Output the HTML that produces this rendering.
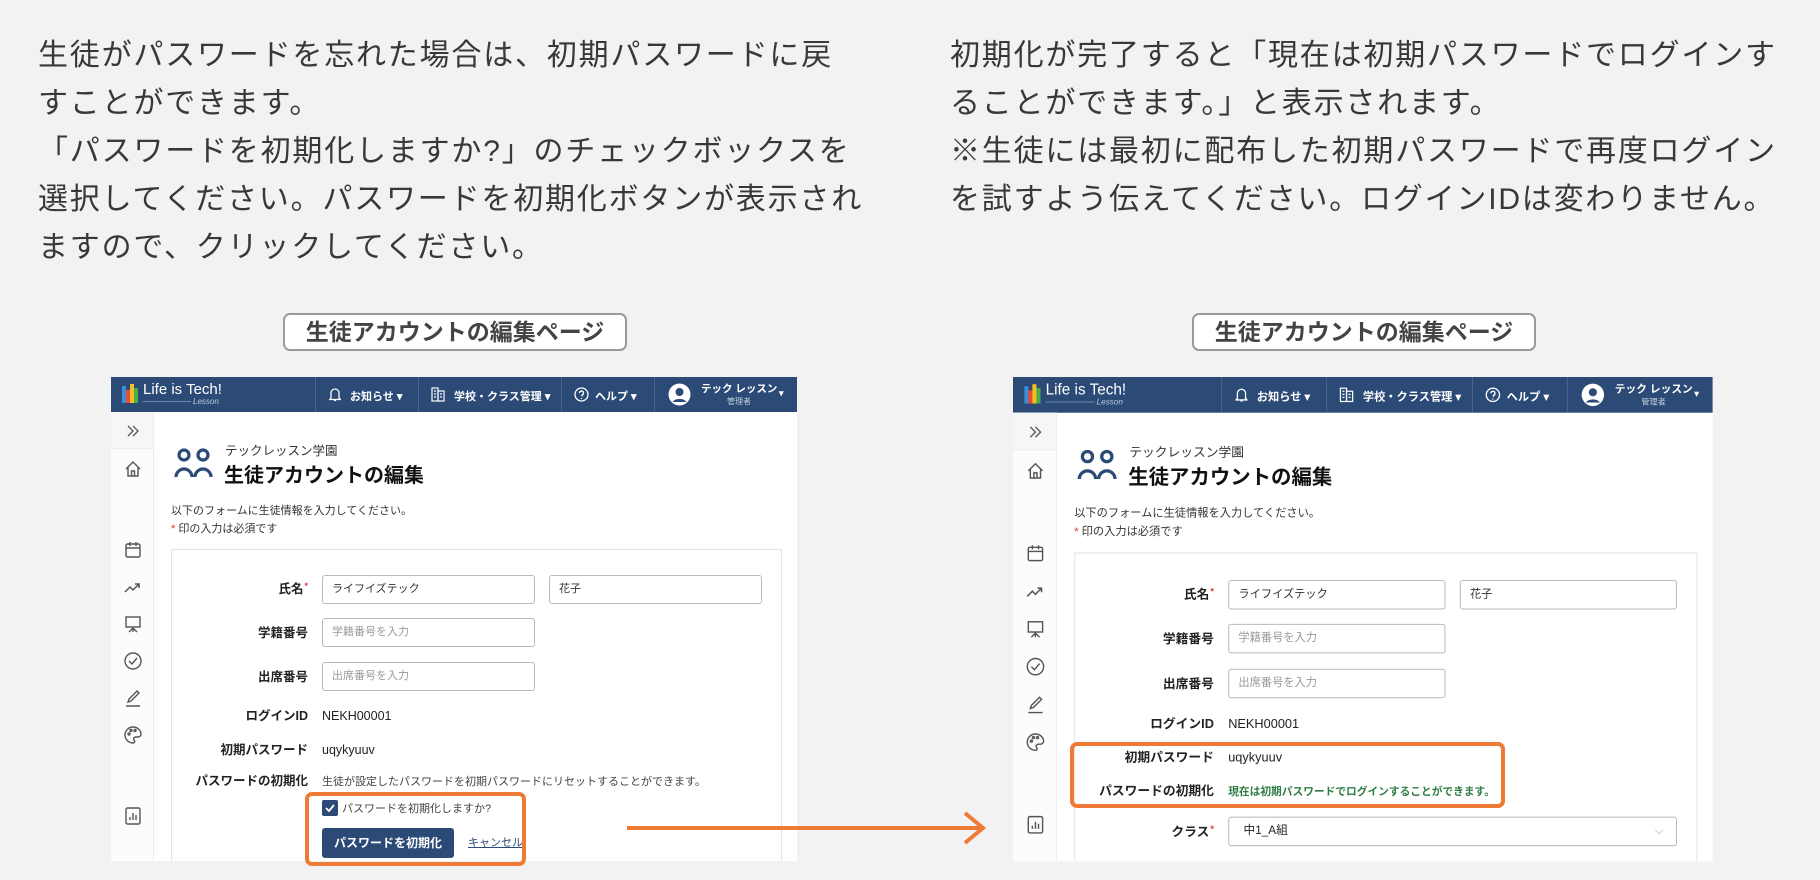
<!DOCTYPE html>
<html><head><meta charset="utf-8"><style>
*{margin:0;padding:0;box-sizing:border-box}
body{width:1820px;height:880px;background:#f2f2f2;position:relative;overflow:hidden;font-family:"Liberation Sans","Noto Sans CJK JP",sans-serif}
.para{position:absolute;top:32px;font-size:30px;line-height:48px;color:#383838;letter-spacing:1.8px;white-space:nowrap}
.lbl{position:absolute;top:313px;height:38px;border:2px solid #9a9a9a;border-radius:7px;background:#fff;font-size:23px;font-weight:bold;color:#444;text-align:center;line-height:34px}
.panel{position:absolute;top:377px;width:686px;height:484px;background:#fff;overflow:hidden;transform-origin:0 0}
.hdr{position:absolute;left:0;top:0;width:686px;height:35px;background:#2b4a76;color:#fff;font-size:11px;font-weight:bold}
.hdr .dv{position:absolute;top:0;width:1px;height:35px;background:#4a6690}
.hdr .t{position:absolute;top:11px;white-space:nowrap}
.side{position:absolute;left:0;top:35px;width:43px;height:460px;background:#fcfcfc;border-right:1px solid #ececec}
.side .top{height:37px;background:#f6f6f6;border-bottom:1px solid #ececec}
.ic{position:absolute;left:12px}
.sub{position:absolute;left:114px;top:63px;font-size:12.5px;color:#333}
.ttl{position:absolute;left:113px;top:82px;font-size:20px;font-weight:bold;color:#111}
.desc{position:absolute;left:60px;font-size:11px;color:#333;white-space:nowrap}
.card{position:absolute;left:60px;top:172px;width:611px;height:330px;border:1px solid #e4e4e4;background:#fff}
.l{position:absolute;right:489px;font-size:12.5px;line-height:16px;font-weight:bold;color:#222;white-space:nowrap;text-align:right}
.v{position:absolute;left:211px;font-size:12.5px;line-height:16px;color:#222;white-space:nowrap}
.in{position:absolute;height:29px;border:1px solid #b9b9b9;border-radius:3px;font-size:11px;padding-left:9px;line-height:27px;color:#333}
.ph{color:#999}
.req{color:#d33;font-size:9px;position:relative;top:-4px;margin-left:1px}
.orange{position:absolute;border:4px solid #ef7a36;border-radius:7px}
</style></head><body>

<div class="para" style="left:38px">生徒がパスワードを忘れた場合は、初期パスワードに戻<br>すことができます。<br>「パスワードを初期化しますか?」のチェックボックスを<br>選択してください。パスワードを初期化ボタンが表示され<br>ますので、クリックしてください。</div>
<div class="para" style="left:950px">初期化が完了すると「現在は初期パスワードでログインす<br>ることができます。」と表示されます。<br>※生徒には最初に配布した初期パスワードで再度ログイン<br>を試すよう伝えてください。ログインIDは変わりません。</div>

<div class="lbl" style="left:283px;width:344px">生徒アカウントの編集ページ</div>
<div class="lbl" style="left:1192px;width:344px">生徒アカウントの編集ページ</div>

<!-- LEFT PANEL -->
<div class="panel" style="left:111px">
 <div class="hdr">
  <svg style="position:absolute;left:11px;top:7px" width="16" height="20"><rect x="0" y="2" width="4" height="17" fill="#3b8fd6"/><rect x="4" y="6" width="4" height="13" fill="#e94b3c"/><rect x="8" y="0" width="4" height="19" fill="#f4c11f"/><rect x="12" y="4" width="4" height="15" fill="#4fae4a"/></svg>
  <div class="t" style="left:32px;top:4px;font-size:15px;font-weight:normal">Life is Tech!</div>
  <div style="position:absolute;left:32px;top:24px;width:48px;height:1px;background:#6b87ad"></div>
  <div class="t" style="left:82px;top:20px;font-size:8px;font-style:italic;font-weight:normal;color:#bcd">Lesson</div>
  <div class="dv" style="left:204px"></div><div class="dv" style="left:307px"></div><div class="dv" style="left:450px"></div><div class="dv" style="left:543px"></div>
  <svg style="position:absolute;left:218px;top:10px" width="12" height="15" fill="none" stroke="#fff" stroke-width="1.3"><path d="M2 11V6a4 4 0 0 1 8 0v5l1.5 1.5h-11z M5 13.5h2"/></svg>
  <div class="t" style="left:239px">お知らせ ▾</div>
  <svg style="position:absolute;left:320px;top:10px" width="14" height="15" fill="none" stroke="#fff" stroke-width="1.2"><rect x="1" y="1" width="6" height="13"/><rect x="7" y="4" width="6" height="10"/><path d="M3 4h2M3 7h2M3 10h2M9 7h2M9 10h2"/></svg>
  <div class="t" style="left:343px">学校・クラス管理 ▾</div>
  <svg style="position:absolute;left:463px;top:10px" width="15" height="15" fill="none" stroke="#fff" stroke-width="1.3"><circle cx="7.5" cy="7.5" r="6.5"/><path d="M5.5 6a2 2 0 1 1 2.5 2v1.5M7.5 11v1"/></svg>
  <div class="t" style="left:484px">ヘルプ ▾</div>
  <svg style="position:absolute;left:557px;top:6px" width="23" height="23"><circle cx="11.5" cy="11.5" r="11" fill="#fff"/><circle cx="11.5" cy="9" r="4" fill="#2b4a76"/><path d="M4.5 19a8 6 0 0 1 14 0" fill="#2b4a76"/></svg>
  <div class="t" style="left:590px;top:4px;font-size:10.5px">テック レッスン</div>
  <div class="t" style="left:616px;top:19px;font-size:8px;font-weight:normal;color:#c8d2e0">管理者</div>
  <div class="t" style="left:668px;font-size:9px">▾</div>
 </div>
 <div class="side"><div class="top"></div></div>
 <svg class="ic" style="top:46px" width="20" height="16" fill="none" stroke="#555" stroke-width="1.3"><path d="M5 3l5 5-5 5M10 3l5 5-5 5"/></svg>
 <svg class="ic" style="top:82px" width="20" height="20" fill="none" stroke="#555" stroke-width="1.4"><path d="M3 10l7-7 7 7M5 8v9h10V8M8.5 17v-5h3v5"/></svg>
 <svg class="ic" style="top:163px" width="20" height="20" fill="none" stroke="#555" stroke-width="1.4"><rect x="3" y="4" width="14" height="13" rx="1.5"/><path d="M3 8h14M7 2v4M13 2v4"/></svg>
 <svg class="ic" style="top:201px" width="20" height="20" fill="none" stroke="#555" stroke-width="1.5"><path d="M2 14l5-5 3 3 6-6M12 6h4v4"/></svg>
 <svg class="ic" style="top:237px" width="20" height="20" fill="none" stroke="#555" stroke-width="1.4"><rect x="3" y="3" width="14" height="10"/><path d="M10 13v5M6 18l4-4 4 4"/></svg>
 <svg class="ic" style="top:274px" width="20" height="20" fill="none" stroke="#555" stroke-width="1.4"><circle cx="10" cy="10" r="8"/><path d="M6 10l3 3 5-6"/></svg>
 <svg class="ic" style="top:311px" width="20" height="20" fill="none" stroke="#555" stroke-width="1.4"><path d="M5 14l1-3 8-8 2 2-8 8-3 1zM3 18h14"/></svg>
 <svg class="ic" style="top:348px" width="20" height="20" fill="none" stroke="#555" stroke-width="1.4"><path d="M10 2a8 8 0 0 0 0 16c2 0 2-2 1-3s0-3 2-3h2a3 3 0 0 0 3-3c0-4-4-7-8-7z"/><circle cx="6" cy="9" r="1"/><circle cx="8" cy="5.5" r="1"/><circle cx="12" cy="5.5" r="1"/></svg>
 <svg class="ic" style="top:429px" width="20" height="20" fill="none" stroke="#555" stroke-width="1.4"><rect x="3" y="2" width="14" height="16" rx="1.5"/><path d="M7 14v-3M10 14V7M13 14v-5"/></svg>
 <svg style="position:absolute;left:63px;top:71px" width="40" height="31" fill="none" stroke="#2b4a76" stroke-width="3.2"><circle cx="10" cy="7" r="5"/><circle cx="29" cy="7" r="5"/><path d="M2 29a8 8 0 0 1 16 0M21 29a8 8 0 0 1 16 0"/></svg>
 <div class="sub">テックレッスン学園</div>
 <div class="ttl">生徒アカウントの編集</div>
 <div class="desc" style="top:125px">以下のフォームに生徒情報を入力してください。</div>
 <div class="desc" style="top:143px"><span style="color:#d33">*</span> 印の入力は必須です</div>
 <div class="card"></div>
 <div class="l" style="top:204px">氏名<span class="req">*</span></div>
 <div class="in" style="left:211px;top:198px;width:213px">ライフイズテック</div>
 <div class="in" style="left:438px;top:198px;width:213px">花子</div>
 <div class="l" style="top:248px">学籍番号</div>
 <div class="in ph" style="left:211px;top:241px;width:213px">学籍番号を入力</div>
 <div class="l" style="top:292px">出席番号</div>
 <div class="in ph" style="left:211px;top:285px;width:213px">出席番号を入力</div>
 <div class="l" style="top:331px">ログインID</div><div class="v" style="top:331px">NEKH00001</div>
 <div class="l" style="top:365px">初期パスワード</div><div class="v" style="top:365px">uqykyuuv</div>
 <div class="l" style="top:396px">パスワードの初期化</div>
 <div class="v" style="top:397px;font-size:11px;color:#444">生徒が設定したパスワードを初期パスワードにリセットすることができます。</div>
 <svg style="position:absolute;left:211px;top:423px" width="16" height="16"><rect width="16" height="16" rx="2" fill="#2b4a76"/><path d="M4 8l3 3 5-6" stroke="#fff" stroke-width="1.8" fill="none"/></svg>
 <div class="v" style="left:231px;top:424px;font-size:11px;color:#444">パスワードを初期化しますか?</div>
 <div style="position:absolute;left:211px;top:451px;width:132px;height:30px;background:#2b4a76;border-radius:3px;color:#fff;font-size:12px;font-weight:bold;text-align:center;line-height:30px">パスワードを初期化</div>
 <div class="v" style="left:357px;top:458px;font-size:11px;color:#2b4a76;text-decoration:underline">キャンセル</div>
</div>

<!-- RIGHT PANEL -->
<div class="panel" style="left:1013px;transform:scale(1.02);height:475px">
 <div class="hdr">
  <svg style="position:absolute;left:11px;top:7px" width="16" height="20"><rect x="0" y="2" width="4" height="17" fill="#3b8fd6"/><rect x="4" y="6" width="4" height="13" fill="#e94b3c"/><rect x="8" y="0" width="4" height="19" fill="#f4c11f"/><rect x="12" y="4" width="4" height="15" fill="#4fae4a"/></svg>
  <div class="t" style="left:32px;top:4px;font-size:15px;font-weight:normal">Life is Tech!</div>
  <div style="position:absolute;left:32px;top:24px;width:48px;height:1px;background:#6b87ad"></div>
  <div class="t" style="left:82px;top:20px;font-size:8px;font-style:italic;font-weight:normal;color:#bcd">Lesson</div>
  <div class="dv" style="left:204px"></div><div class="dv" style="left:307px"></div><div class="dv" style="left:450px"></div><div class="dv" style="left:543px"></div>
  <svg style="position:absolute;left:218px;top:10px" width="12" height="15" fill="none" stroke="#fff" stroke-width="1.3"><path d="M2 11V6a4 4 0 0 1 8 0v5l1.5 1.5h-11z M5 13.5h2"/></svg>
  <div class="t" style="left:239px">お知らせ ▾</div>
  <svg style="position:absolute;left:320px;top:10px" width="14" height="15" fill="none" stroke="#fff" stroke-width="1.2"><rect x="1" y="1" width="6" height="13"/><rect x="7" y="4" width="6" height="10"/><path d="M3 4h2M3 7h2M3 10h2M9 7h2M9 10h2"/></svg>
  <div class="t" style="left:343px">学校・クラス管理 ▾</div>
  <svg style="position:absolute;left:463px;top:10px" width="15" height="15" fill="none" stroke="#fff" stroke-width="1.3"><circle cx="7.5" cy="7.5" r="6.5"/><path d="M5.5 6a2 2 0 1 1 2.5 2v1.5M7.5 11v1"/></svg>
  <div class="t" style="left:484px">ヘルプ ▾</div>
  <svg style="position:absolute;left:557px;top:6px" width="23" height="23"><circle cx="11.5" cy="11.5" r="11" fill="#fff"/><circle cx="11.5" cy="9" r="4" fill="#2b4a76"/><path d="M4.5 19a8 6 0 0 1 14 0" fill="#2b4a76"/></svg>
  <div class="t" style="left:590px;top:4px;font-size:10.5px">テック レッスン</div>
  <div class="t" style="left:616px;top:19px;font-size:8px;font-weight:normal;color:#c8d2e0">管理者</div>
  <div class="t" style="left:668px;font-size:9px">▾</div>
 </div>
 <div class="side"><div class="top"></div></div>
 <svg class="ic" style="top:46px" width="20" height="16" fill="none" stroke="#555" stroke-width="1.3"><path d="M5 3l5 5-5 5M10 3l5 5-5 5"/></svg>
 <svg class="ic" style="top:82px" width="20" height="20" fill="none" stroke="#555" stroke-width="1.4"><path d="M3 10l7-7 7 7M5 8v9h10V8M8.5 17v-5h3v5"/></svg>
 <svg class="ic" style="top:163px" width="20" height="20" fill="none" stroke="#555" stroke-width="1.4"><rect x="3" y="4" width="14" height="13" rx="1.5"/><path d="M3 8h14M7 2v4M13 2v4"/></svg>
 <svg class="ic" style="top:201px" width="20" height="20" fill="none" stroke="#555" stroke-width="1.5"><path d="M2 14l5-5 3 3 6-6M12 6h4v4"/></svg>
 <svg class="ic" style="top:237px" width="20" height="20" fill="none" stroke="#555" stroke-width="1.4"><rect x="3" y="3" width="14" height="10"/><path d="M10 13v5M6 18l4-4 4 4"/></svg>
 <svg class="ic" style="top:274px" width="20" height="20" fill="none" stroke="#555" stroke-width="1.4"><circle cx="10" cy="10" r="8"/><path d="M6 10l3 3 5-6"/></svg>
 <svg class="ic" style="top:311px" width="20" height="20" fill="none" stroke="#555" stroke-width="1.4"><path d="M5 14l1-3 8-8 2 2-8 8-3 1zM3 18h14"/></svg>
 <svg class="ic" style="top:348px" width="20" height="20" fill="none" stroke="#555" stroke-width="1.4"><path d="M10 2a8 8 0 0 0 0 16c2 0 2-2 1-3s0-3 2-3h2a3 3 0 0 0 3-3c0-4-4-7-8-7z"/><circle cx="6" cy="9" r="1"/><circle cx="8" cy="5.5" r="1"/><circle cx="12" cy="5.5" r="1"/></svg>
 <svg class="ic" style="top:429px" width="20" height="20" fill="none" stroke="#555" stroke-width="1.4"><rect x="3" y="2" width="14" height="16" rx="1.5"/><path d="M7 14v-3M10 14V7M13 14v-5"/></svg>
 <svg style="position:absolute;left:63px;top:71px" width="40" height="31" fill="none" stroke="#2b4a76" stroke-width="3.2"><circle cx="10" cy="7" r="5"/><circle cx="29" cy="7" r="5"/><path d="M2 29a8 8 0 0 1 16 0M21 29a8 8 0 0 1 16 0"/></svg>
 <div class="sub">テックレッスン学園</div>
 <div class="ttl">生徒アカウントの編集</div>
 <div class="desc" style="top:125px">以下のフォームに生徒情報を入力してください。</div>
 <div class="desc" style="top:143px"><span style="color:#d33">*</span> 印の入力は必須です</div>
 <div class="card"></div>
 <div class="l" style="top:205px">氏名<span class="req">*</span></div>
 <div class="in" style="left:211px;top:199px;width:213px">ライフイズテック</div>
 <div class="in" style="left:438px;top:199px;width:213px">花子</div>
 <div class="l" style="top:249px">学籍番号</div>
 <div class="in ph" style="left:211px;top:242px;width:213px">学籍番号を入力</div>
 <div class="l" style="top:293px">出席番号</div>
 <div class="in ph" style="left:211px;top:286px;width:213px">出席番号を入力</div>
 <div class="l" style="top:332px">ログインID</div><div class="v" style="top:332px">NEKH00001</div>
 <div class="l" style="top:365px">初期パスワード</div><div class="v" style="top:365px">uqykyuuv</div>
 <div class="l" style="top:398px">パスワードの初期化</div>
 <div class="v" style="top:399px;font-size:10.5px;font-weight:bold;color:#2e7d45">現在は初期パスワードでログインすることができます。</div>
 <div class="l" style="top:438px">クラス<span class="req">*</span></div>
 <div class="in" style="left:211px;top:431px;width:440px;padding-left:14px;font-size:11.5px;color:#222">中1_A組<span style="position:absolute;right:12px;top:0;color:#aaa">⌵</span></div>
</div>

<div class="orange" style="left:305px;top:792px;width:221px;height:74px"></div>
<div class="orange" style="left:1070px;top:742px;width:435px;height:66px"></div>

<svg style="position:absolute;left:625px;top:810px" width="365" height="40" fill="none" stroke="#ef7a36" stroke-width="4"><path d="M2 18H358M340 3l18 15-18 15"/></svg>
</body></html>
